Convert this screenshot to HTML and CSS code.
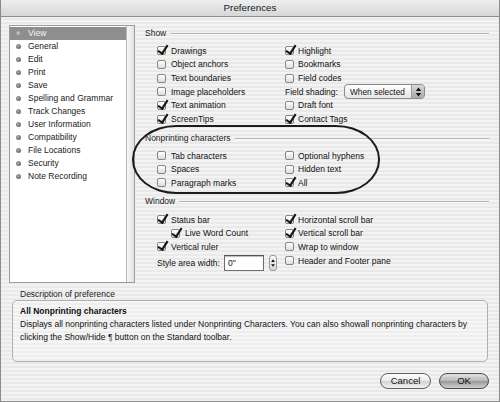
FILE: index.html
```html
<!DOCTYPE html>
<html>
<head>
<meta charset="utf-8">
<title>Preferences</title>
<link rel="stylesheet" href="styles.css">
</head>
<body>
<div class="window">
  <div class="titlebar">Preferences</div>
  <div class="content">
    <div class="top">
      <div class="sidebar">
        <ul class="list">
          <li class="sel"><i class="dot"></i>View</li>
          <li><i class="dot"></i>General</li>
          <li><i class="dot"></i>Edit</li>
          <li><i class="dot"></i>Print</li>
          <li><i class="dot"></i>Save</li>
          <li><i class="dot"></i>Spelling and Grammar</li>
          <li><i class="dot"></i>Track Changes</li>
          <li><i class="dot"></i>User Information</li>
          <li><i class="dot"></i>Compatibility</li>
          <li><i class="dot"></i>File Locations</li>
          <li><i class="dot"></i>Security</li>
          <li><i class="dot"></i>Note Recording</li>
        </ul>
        <div class="track"></div>
      </div>
      <div class="panel">
        <section class="group g-show">
          <div class="legend"><span>Show</span><b class="rule"></b></div>
          <div class="grid">
            <div class="col">
              <label class="row"><i class="cb on"></i>Drawings</label>
              <label class="row"><i class="cb"></i>Object anchors</label>
              <label class="row"><i class="cb"></i>Text boundaries</label>
              <label class="row"><i class="cb"></i>Image placeholders</label>
              <label class="row"><i class="cb on"></i>Text animation</label>
              <label class="row"><i class="cb on"></i>ScreenTips</label>
            </div>
            <div class="col right">
              <label class="row"><i class="cb on"></i>Highlight</label>
              <label class="row"><i class="cb"></i>Bookmarks</label>
              <label class="row"><i class="cb"></i>Field codes</label>
              <div class="row shading"><span class="lbl">Field shading:</span>
                <span class="popup"><span class="ptext">When selected</span><span class="parrows"><svg width="7" height="10" viewBox="0 0 7 10"><path d="M3.5 0.5 L6.2 4 L0.8 4 Z M0.8 6 L6.2 6 L3.5 9.5 Z" fill="#111"/></svg></span></span>
              </div>
              <label class="row"><i class="cb"></i>Draft font</label>
              <label class="row"><i class="cb on"></i>Contact Tags</label>
            </div>
          </div>
        </section>
        <section class="group g-np">
          <div class="legend"><span>Nonprinting characters</span><b class="rule"></b></div>
          <div class="grid">
            <div class="col">
              <label class="row"><i class="cb"></i>Tab characters</label>
              <label class="row"><i class="cb"></i>Spaces</label>
              <label class="row"><i class="cb"></i>Paragraph marks</label>
            </div>
            <div class="col right">
              <label class="row"><i class="cb"></i>Optional hyphens</label>
              <label class="row"><i class="cb"></i>Hidden text</label>
              <label class="row"><i class="cb on"></i>All</label>
            </div>
          </div>
          <div class="oval"></div>
        </section>
        <section class="group g-win">
          <div class="legend"><span>Window</span><b class="rule"></b></div>
          <div class="grid">
            <div class="col">
              <label class="row"><i class="cb on"></i>Status bar</label>
              <label class="row indent"><i class="cb on"></i>Live Word Count</label>
              <label class="row"><i class="cb on"></i>Vertical ruler</label>
              <div class="row style-row"><span class="lbl">Style area width:</span><span class="field">0"</span><span class="stepper"><svg width="8" height="16" viewBox="0 0 8 16"><path d="M4 3 L6.5 6.5 L1.5 6.5 Z M1.5 9.5 L6.5 9.5 L4 13 Z" fill="#111"/></svg></span></div>
            </div>
            <div class="col right">
              <label class="row"><i class="cb on"></i>Horizontal scroll bar</label>
              <label class="row"><i class="cb on"></i>Vertical scroll bar</label>
              <label class="row"><i class="cb"></i>Wrap to window</label>
              <label class="row"><i class="cb"></i>Header and Footer pane</label>
            </div>
          </div>
        </section>
      </div>
    </div>
    <div class="desc">
      <div class="desc-label">Description of preference</div>
      <div class="desc-box">
        <div class="desc-title">All Nonprinting characters</div>
        <p class="desc-text">Displays all nonprinting characters listed under Nonprinting Characters. You can also showall nonprinting characters by clicking the Show/Hide ¶ button on the Standard toolbar.</p>
      </div>
    </div>
    <div class="buttons">
      <button class="btn">Cancel</button>
      <button class="btn ok">OK</button>
    </div>
  </div>
</div>
</body>
</html>
```
FILE: styles.css
```css
* { box-sizing: border-box; }
html, body { margin: 0; padding: 0; }
body {
  width: 500px;
  height: 402px;
  font-family: "Liberation Sans", Arial, sans-serif;
  font-size: 8.5px;
  color: #111;
  overflow: hidden;
}
.window {
  width: 500px;
  height: 402px;
  border: 1px solid #8a8a8a;
  border-top: none;
  display: flex;
  flex-direction: column;
  background: repeating-linear-gradient(to bottom, #f3f3f3 0, #f3f3f3 2px, #e9e9e9 2px, #e9e9e9 4px);
}
.titlebar {
  height: 17px;
  line-height: 16px;
  text-align: center;
  font-size: 9.8px;
  color: #1a1a1a;
  background: linear-gradient(#eeeeee, #d6d6d6);
  border-bottom: 1px solid #8c8c8c;
  flex: none;
}
.content {
  flex: 1;
  display: flex;
  flex-direction: column;
  padding: 8px 10px 0 8px;
}
.top {
  display: flex;
  gap: 10px;
}
.sidebar {
  width: 126px;
  height: 258px;
  display: flex;
  border: 1px solid #9c9c9c;
  flex: none;
}
.list {
  list-style: none;
  margin: 0;
  padding: 1px 0 0 0;
  flex: 1;
  background: #fff;
  border-right: 1px solid #b8b8b8;
}
.list li {
  height: 13px;
  line-height: 13px;
  display: flex;
  align-items: center;
  padding-left: 6px;
  gap: 7px;
  color: #1a1a1a;
}
.list li.sel {
  background: #8e8e8e;
  color: #f4f4f4;
}
.dot {
  width: 5px;
  height: 5px;
  border-radius: 50%;
  background: radial-gradient(circle at 40% 35%, #aaa, #555);
  flex: none;
}
.sel .dot { background: radial-gradient(circle at 40% 35%, #ccc, #777); }
.track {
  width: 7px;
  background: linear-gradient(to right, #f6f6f6, #e2e2e2);
}
.panel {
  flex: 1;
  padding-top: 2px;
}
.group { position: relative; }
.legend {
  display: flex;
  align-items: center;
  height: 12px;
  gap: 4px;
  color: #1a1a1a;
}
.rule {
  flex: 1;
  height: 2px;
  border-top: 1px solid #b4b4b4;
  border-bottom: 1px solid #fafafa;
  margin-top: 2px;
}
.grid {
  display: grid;
  grid-template-columns: 128px 1fr;
  padding-left: 12px;
}
.g-show .grid { margin-top: 5px; }
.g-np { margin-top: 6px; }
.g-np .grid { margin-top: 5px; }
.g-win { margin-top: 5px; }
.g-win .grid { margin-top: 6px; }
.row {
  height: 13.65px;
  display: flex;
  align-items: center;
  gap: 5px;
  color: #111;
  white-space: nowrap;
}
.right .row { gap: 4px; }
.indent { padding-left: 14px; }
.cb {
  width: 9px;
  height: 9px;
  border: 1px solid #858585;
  border-radius: 2px;
  background: linear-gradient(#ffffff, #dcdcdc);
  position: relative;
  flex: none;
}
.cb.on::after {
  content: "";
  position: absolute;
  left: 2px;
  top: -4px;
  width: 3.5px;
  height: 9px;
  border-right: 2.3px solid #111;
  border-bottom: 2.3px solid #111;
  transform: rotate(33deg);
}
.shading .lbl { width: 55px; }
.popup {
  width: 81px;
  height: 15px;
  border: 1px solid #8a8a8a;
  border-radius: 4px;
  background: linear-gradient(#ffffff, #e6e6e6);
  display: flex;
  align-items: center;
  overflow: hidden;
}
.ptext { flex: 1; padding-left: 5px; font-size: 8.3px; }
.parrows {
  width: 13px;
  height: 100%;
  display: flex;
  align-items: center;
  justify-content: center;
  background: linear-gradient(#d8d8d8, #a8a8a8);
  border-left: 1px solid #9a9a9a;
}
.style-row { height: 18px; gap: 0; }
.style-row .lbl { width: 67px; }
.field {
  width: 40px;
  height: 16px;
  border: 1px solid #6e6e6e;
  border-top-color: #555;
  background: #fff;
  box-shadow: inset 0 1px 1px #bbb;
  padding-left: 3px;
  line-height: 14px;
}
.stepper {
  margin-left: 5px;
  width: 8px;
  height: 16px;
  border: 1px solid #9a9a9a;
  border-radius: 3px;
  background: linear-gradient(#fafafa, #d6d6d6);
  display: flex;
  justify-content: center;
  align-items: center;
}
.stepper svg { display: block; }
.oval {
  position: absolute;
  left: -13px;
  top: -7px;
  width: 248px;
  height: 69px;
  border: 2px solid #1c1c1c;
  border-radius: 44px / 34px;
  pointer-events: none;
}
.desc {
  margin-top: 5px;
  padding-left: 3px;
  padding-right: 1px;
}
.desc-label {
  height: 12px;
  line-height: 12px;
  padding-left: 8px;
  color: #1a1a1a;
}
.desc-box {
  height: 62px;
  border: 1px solid #b0b0b0;
  border-radius: 5px;
  padding: 4px 7px;
  background: repeating-linear-gradient(to bottom, #f6f6f6 0, #f6f6f6 2px, #eeeeee 2px, #eeeeee 4px);
}
.desc-title {
  font-weight: bold;
  line-height: 12px;
  color: #111;
}
.desc-text {
  margin: 1px 0 0 0;
  line-height: 13px;
  color: #111;
}
.buttons {
  display: flex;
  justify-content: flex-end;
  gap: 8px;
  margin-top: 11px;
}
.btn {
  font-family: "Liberation Sans", Arial, sans-serif;
  font-size: 9.5px;
  height: 16px;
  width: 51px;
  border: 1px solid #5e5e5e;
  border-radius: 8px;
  background: linear-gradient(#ffffff, #e8e8e8 50%, #d2d2d2 51%, #f2f2f2);
  color: #111;
  padding: 0;
  line-height: 14px;
}
.btn.ok {
  width: 50px;
  background: linear-gradient(#e4e4e4, #b6b6b6 50%, #999 51%, #cfcfcf);
  border-color: #4a4a4a;
}
```
